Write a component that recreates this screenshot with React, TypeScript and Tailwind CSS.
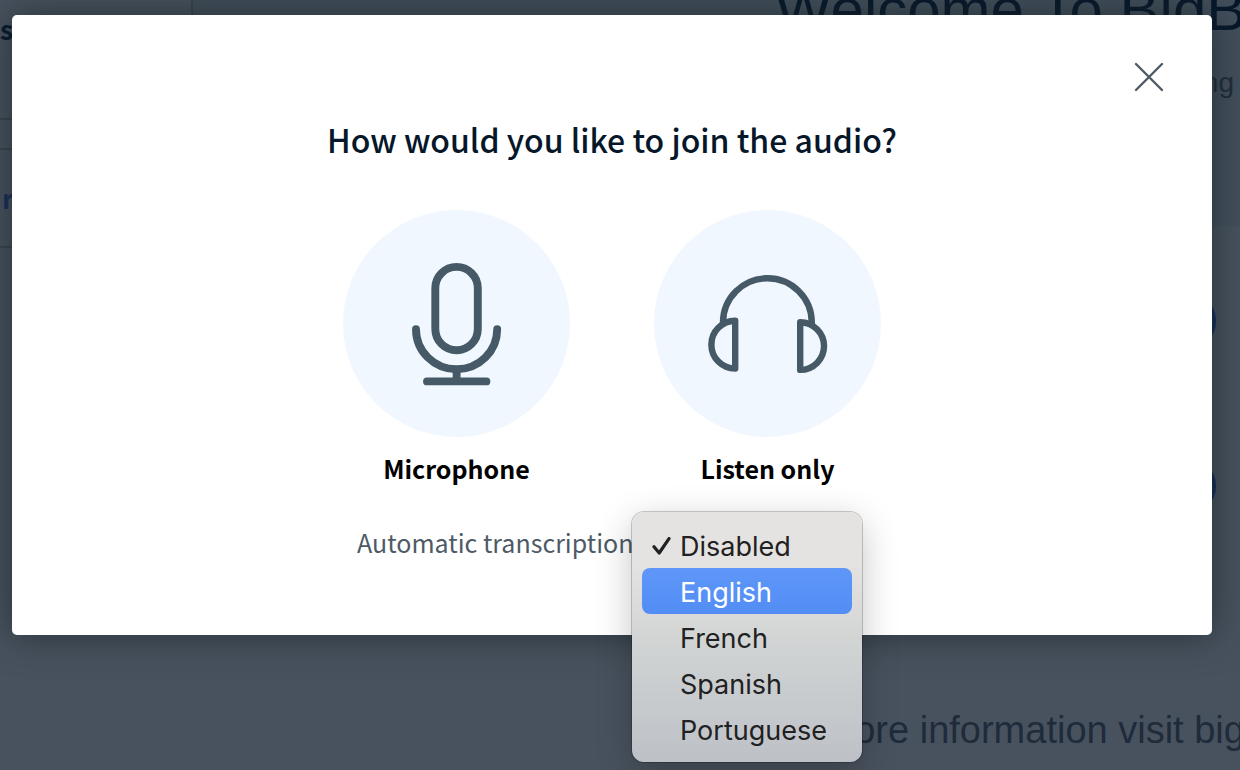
import React from "react";

const languages = ["Disabled", "English", "French", "Spanish", "Portuguese"];

function MicrophoneIcon() {
  return (
    <svg viewBox="0 0 227 227" className="size-full" fill="none" stroke="#455a66" strokeWidth="7.9" strokeLinecap="round" aria-hidden="true">
      <rect x="92.3" y="56.9" width="42.5" height="83.3" rx="21.25" />
      <path d="M73 119.2A40.6 40 0 0 0 154.2 119.2" />
      <path d="M113.6 160V171" strokeLinecap="butt" />
      <path d="M84 171.4H143.4" />
    </svg>
  );
}

function HeadphonesIcon() {
  return (
    <svg viewBox="0 0 227 227" className="size-full" fill="none" stroke="#455a66" strokeWidth="6.4" strokeLinejoin="round" aria-hidden="true">
      <path d="M69 113.5V112.7A44.4 44.4 0 0 1 157.8 112.7V115" />
      <path d="M81.2 110.8A23.85 23.85 0 0 0 81.2 158.5Z" />
      <path d="M146.2 112.2A23.85 23.85 0 0 1 146.2 159.9Z" />
    </svg>
  );
}

function AudioOption({ label, children }: { label: string; children: React.ReactNode }) {
  return (
    <button type="button" className="flex w-[227px] flex-col items-center gap-[15px] text-black">
      <span className="size-[227px] rounded-full bg-[#f1f7fe]">{children}</span>
      <span className="text-[25px] leading-8 font-bold">{label}</span>
    </button>
  );
}

function LanguageMenu() {
  return (
    <ul
      role="listbox"
      aria-label="Transcription language"
      className="absolute top-0 left-0 w-[230px] rounded-xl bg-linear-to-b from-[#e5e3e1] from-20% via-[#d0d3d3] via-55% to-[#bdc1c7] p-[10px] font-['Inter',sans-serif] text-[27px] text-[#1f2122] shadow-[0_0_0_1px_rgba(0,0,0,0.2),0_10px_36px_rgba(0,0,0,0.24)]"
    >
      {languages.map((name) => (
        <li key={name} role="option" aria-selected={name === "Disabled"}>
          <button
            type="button"
            className={
              name === "English"
                ? "flex h-[46px] w-full items-center rounded-lg bg-linear-to-b from-[#5f97f8] to-[#528df5] pt-1 text-white"
                : "flex h-[46px] w-full items-center pt-1"
            }
          >
            <span className="flex w-[38px] justify-center">
              {name === "Disabled" && (
                <svg viewBox="0 0 20 20" className="size-5" fill="none" stroke="currentColor" strokeWidth="3.2" strokeLinecap="round" strokeLinejoin="round" aria-hidden="true">
                  <path d="M3 9.800L8.200 16L18 1.600" />
                </svg>
              )}
            </span>
            {name}
          </button>
        </li>
      ))}
    </ul>
  );
}

function Session() {
  return (
    <div className="flex h-full font-['Liberation_Sans',sans-serif] text-[#1f2b3b]" aria-hidden="true">
      <aside className="w-[193px] shrink-0 font-['Noto_Sans_CJK_SC',sans-serif] font-bold">
        <div className="flex h-[120px] items-start border-r-2 border-b-2 border-[#38434e] pt-[11px] text-[27px] leading-9 text-[#06172a]">s</div>
        <div className="h-[30px] border-b-2 border-[#38434e]" />
        <div className="flex h-[98px] items-center border-b-2 border-[#38434e] pl-[2px] text-[27px] text-[#142c5c]">r</div>
      </aside>
      <main className="flex min-w-0 flex-1 flex-col">
        <section className="flex h-[226px] flex-col overflow-hidden bg-[#424f5b]">
          <h1 className="-mt-5 pl-[582px] text-[60px] leading-[60px] whitespace-nowrap text-[#06172a]">Welcome To BigBlueButton</h1>
          <p className="mt-[27px] pr-[6px] text-right text-[28px] leading-8">ng</p>
        </section>
        <section className="flex flex-1 flex-col items-end gap-[105px] pt-[65px] pr-6">
          <span className="size-[60px] rounded-full bg-[#0f2a56]" />
          <span className="size-[60px] rounded-full bg-[#0f2a56]" />
        </section>
        <p className="h-[62px] pl-[562px] text-[38px] leading-[44px] whitespace-nowrap">For more information visit bigbluebutton.org</p>
      </main>
    </div>
  );
}

export default function App() {
  return (
    <div className="relative h-screen overflow-hidden bg-[#48525e]">
      <Session />
      <div className="absolute inset-0 pt-[15px] pr-7 pl-3 font-['Noto_Sans_CJK_SC',sans-serif]">
        <div
          role="dialog"
          aria-modal="true"
          aria-labelledby="audio-title"
          className="flex flex-col items-center rounded-[5px] bg-white px-12 pt-[47px] pb-[71px] shadow-[0_0_36px_rgba(25,36,40,0.7)]"
        >
          <button type="button" aria-label="Close" className="self-end text-[#4e5a66]">
            <svg viewBox="0 0 30 30" className="size-[30px]" fill="none" stroke="currentColor" strokeWidth="2.4" strokeLinecap="round" aria-hidden="true">
              <path d="M2 2L28 28M28 2L2 28" />
            </svg>
          </button>
          <h2 id="audio-title" className="mt-[23px] text-[32px] leading-[48px] font-medium text-[#06172a]">How would you like to join the audio?</h2>
          <div className="mt-[47px] flex gap-[84px]">
            <AudioOption label="Microphone">
              <MicrophoneIcon />
            </AudioOption>
            <AudioOption label="Listen only">
              <HeadphonesIcon />
            </AudioOption>
          </div>
          <div className="mt-7 flex h-[52px] w-[510px]">
            <label htmlFor="transcription" className="w-[275px] pt-3 text-[25px] leading-9 whitespace-nowrap text-[#4e5a66]">
              Automatic transcription
            </label>
            <div className="relative flex-1">
              <select id="transcription" defaultValue="Disabled" className="h-[46px] w-[220px] appearance-none">
                {languages.map((name) => (
                  <option key={name}>{name}</option>
                ))}
              </select>
              <LanguageMenu />
            </div>
          </div>
        </div>
      </div>
    </div>
  );
}
